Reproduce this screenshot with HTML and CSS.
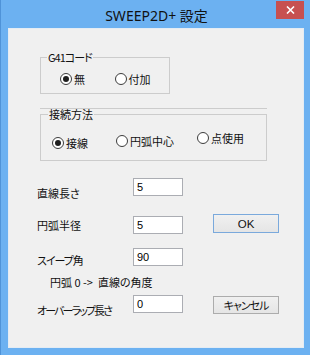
FILE: index.html
```html
<!DOCTYPE html>
<html lang="ja">
<head>
  <meta charset="UTF-8" />
  <title>SWEEP2D+ 設定</title>
  <link rel="stylesheet" href="styles.css">
</head>
<body>

  <div class="window">
    <div class="titlebar">
      <span></span>
      <div class="title">SWEEP2D+ 設定</div>
      <button class="close" title="閉じる">
        <svg width="9" height="8" viewBox="0 0 9 8">
          <path d="M1 0.5 L8 7.5 M8 0.5 L1 7.5" stroke="#fff" stroke-width="1.6" fill="none"/>
        </svg>
      </button>
    </div>

    <div class="client">
      <fieldset class="group g41">
        <legend class="tight">G41コード</legend>
        <div class="radio-row">
          <label class="radio checked"><span class="dot"></span>無</label>
          <label class="radio"><span class="dot"></span>付加</label>
        </div>
      </fieldset>

      <div class="divider"></div>

      <fieldset class="group conn">
        <legend>接続方法</legend>
        <div class="radio-row">
          <label class="radio checked"><span class="dot"></span>接線</label>
          <label class="radio"><span class="dot"></span>円弧中心</label>
          <label class="radio"><span class="dot"></span>点使用</label>
        </div>
      </fieldset>

      <div class="row row-line">
        <span class="label">直線長さ</span>
        <input class="field" type="text" value="5">
      </div>

      <div class="row row-radius">
        <span class="label">円弧半径</span>
        <input class="field" type="text" value="5">
        <button class="btn btn-default">OK</button>
      </div>

      <div class="row row-sweep">
        <span class="label tight">スイープ角</span>
        <input class="field" type="text" value="90">
      </div>

      <div class="note">円弧 0 -&gt;&nbsp; 直線の角度</div>

      <div class="row row-overlap">
        <span class="label tighter">オーバーラップ長さ</span>
        <input class="field" type="text" value="0">
        <button class="btn tight">キャンセル</button>
      </div>
    </div>
  </div>

</body>
</html>
```

FILE: styles.css
```css
body {
  margin: 0;
  font-family: "Noto Sans CJK JP", "Noto Sans", sans-serif;
  font-feature-settings: "palt";
  font-size: 11px;
  color: #111;
}

.tight { letter-spacing: -1px; }
.tighter { letter-spacing: -1.9px; }

.window {
  width: 310px;
  height: 355px;
  box-sizing: border-box;
  padding: 0 6px 7px 8px;
  background: #6cb1f1;
  border-left: 1px solid #4f93d8;
}

.titlebar {
  display: grid;
  grid-template-columns: 28px 1fr 28px;
  height: 28px;
}

.title {
  text-align: center;
  font-family: "Noto Sans", "Noto Sans CJK JP", sans-serif;
  font-size: 14px;
  line-height: 26px;
  padding-top: 3px;
  color: #111;
}

.close {
  margin-top: 1px;
  height: 18px;
  padding: 0;
  border: none;
  background: #c75050;
  display: flex;
  align-items: center;
  justify-content: center;
}

.client {
  box-sizing: border-box;
  width: 296px;
  height: 320px;
  margin-left: -1px;
  background: #f0f0f0;
  border: 1px solid #e4ecf4;
  overflow: hidden;
}

/* group boxes */
.group {
  box-sizing: border-box;
  margin: 0 0 0 31px;
  border: 1px solid #cccccc;
  padding: 0 0 0 6px;
  min-width: 0;
}

.group legend {
  padding: 0 1px;
  line-height: 14px;
}

.g41 {
  margin-top: 21px;
  width: 130px;
  height: 44px;
}

.g41 .radio-row {
  margin-top: 8px;
  padding-left: 13px;
}

.g41 .radio {
  width: 58px;
}

.divider {
  margin: 14px 0 0 31px;
  width: 227px;
  border-top: 1px solid #cccccc;
}

.conn {
  margin-top: -2px;
  width: 227px;
  height: 54px;
  padding-left: 7px;
}

.conn .radio-row {
  margin-top: 10px;
  padding-left: 4px;
}

.conn .radio:nth-child(1) { width: 64px; margin-top: 5px; }
.conn .radio:nth-child(2) { width: 81px; margin-top: 3px; }

.radio-row {
  display: flex;
  align-items: flex-start;
}

.radio {
  display: flex;
  align-items: center;
  height: 14px;
  line-height: 14px;
  white-space: nowrap;
}

.dot {
  box-sizing: border-box;
  width: 12px;
  height: 12px;
  margin-right: 2px;
  border: 1px solid #3c3c3c;
  border-radius: 50%;
  background: #fff;
  display: flex;
  align-items: center;
  justify-content: center;
}

.radio.checked .dot::after {
  content: "";
  width: 6px;
  height: 6px;
  border-radius: 50%;
  background: #1e1e1e;
}

/* value rows */
.row {
  display: flex;
  align-items: flex-start;
  margin-left: 28px;
}

.label {
  width: 96px;
  margin-top: 8px;
  line-height: 14px;
  white-space: nowrap;
}

.field {
  box-sizing: border-box;
  width: 50px;
  height: 18px;
  margin: 0;
  padding: 0 3px;
  border: 1px solid #abadb3;
  background: #fff;
  font-family: "Liberation Sans", sans-serif;
  font-size: 11px;
  color: #000;
}

.btn {
  box-sizing: border-box;
  width: 66px;
  height: 19px;
  margin-left: 30px;
  padding: 0;
  border: 1px solid #acacac;
  background: linear-gradient(#f0f0f0, #e5e5e5);
  font-family: "Noto Sans CJK JP", sans-serif;
  font-feature-settings: "palt";
  font-size: 11px;
  line-height: 16px;
  color: #111;
}

.btn-default {
  border-color: #7aa9dc;
  font-family: "Liberation Sans", sans-serif;
  font-size: 11.5px;
}

.row-line { margin-top: 17px; }

.row-radius { margin-top: 14px; }
.row-radius .label { margin-top: 4px; }
.row-radius .field { margin-top: 2px; }

.row-sweep { margin-top: 14px; }
.row-sweep .label { margin-top: 5px; }

.note {
  margin: 8px 0 0 41px;
  line-height: 14px;
}

.row-overlap { margin-top: 6px; }
.row-overlap .label { margin-top: 8px; }
.row-overlap .btn { margin-top: 1px; height: 18px; }
```
